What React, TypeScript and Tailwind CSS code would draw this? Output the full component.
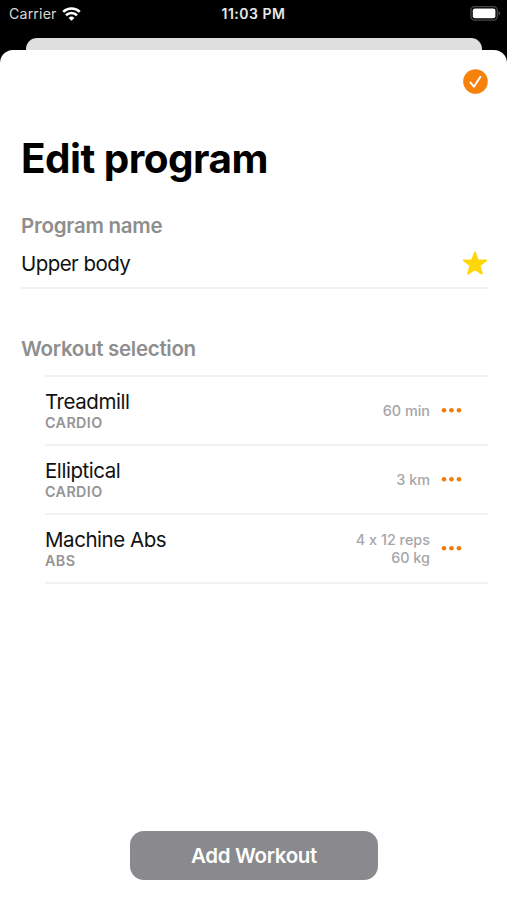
type Workout = {
  name: string;
  category: string;
  details: string[];
};

const WORKOUTS: Workout[] = [
  { name: "Treadmill", category: "CARDIO", details: ["60 min"] },
  { name: "Elliptical", category: "CARDIO", details: ["3 km"] },
  { name: "Machine Abs", category: "ABS", details: ["4 x 12 reps", "60 kg"] },
];

function WifiIcon() {
  return (
    <svg width="19" height="14" viewBox="0 0 19 14" fill="none" stroke="white" strokeWidth="2.6">
      <path d="M1.2 4.9a11.9 11.9 0 0 1 16.6 0" />
      <path d="M4 8.2a7.9 7.9 0 0 1 11 0" />
      <path d="M9.5 13.8 6.6 10.9a4.1 4.1 0 0 1 5.8 0z" fill="white" stroke="none" />
    </svg>
  );
}

function BatteryIcon() {
  return (
    <svg width="31" height="15" viewBox="0 0 31 15" fill="none">
      <rect x="0.9" y="0.7" width="26.4" height="13.4" rx="3.8" stroke="#4a4a4c" strokeWidth="1.3" />
      <rect x="2.8" y="2.6" width="22.6" height="9.6" rx="2" fill="white" />
      <path d="M28.6 5.2c1.1.4 1.6 1.2 1.6 2.2s-.5 1.8-1.6 2.2z" fill="#4a4a4c" />
    </svg>
  );
}

function StatusBar() {
  return (
    <div className="grid h-[38px] grid-cols-3 pt-[3px] text-white">
      <div className="flex h-[21px] items-center gap-[5px] pl-[9px]">
        <span className="text-[14.2px] tracking-[0.15px] text-[#d8d8d8]">Carrier</span>
        <WifiIcon />
      </div>
      <div className="flex h-[21px] items-center justify-center text-[14px] font-semibold tracking-[0.5px] text-[#e8e8e8]">
        11:03 PM
      </div>
      <div className="flex h-[21px] items-center justify-end pr-[6px]">
        <BatteryIcon />
      </div>
    </div>
  );
}

function WorkoutRow({ workout }: { workout: Workout }) {
  return (
    <li className="flex h-[69px] items-center border-b-2 border-[#f1f1f2]">
      <div className="flex-1 pt-0.5">
        <p className="text-[20.5px] leading-[22px] tracking-[-0.45px] text-[#111]">{workout.name}</p>
        <p className="text-[14.3px] font-semibold leading-5 tracking-[0.4px] text-[#949496]">{workout.category}</p>
      </div>
      <div className="text-right text-[14.4px] font-medium leading-[18px] text-[#a6a6a8]">
        {workout.details.map((d) => (
          <p key={d}>{d}</p>
        ))}
      </div>
      <button className="mr-[26px] ml-[11px]" aria-label="More">
        <svg width="21" height="7" viewBox="0 0 21 7" fill="#ee7d0c">
          <circle cx="3" cy="3.2" r="2.3" />
          <circle cx="10.5" cy="3.2" r="2.3" />
          <circle cx="18" cy="3.2" r="2.3" />
        </svg>
      </button>
    </li>
  );
}

export default function App() {
  return (
    <div className="flex h-[900px] w-[507px] flex-col overflow-hidden bg-black font-[Inter,sans-serif] [font-feature-settings:'calt'_0]">
      <StatusBar />
      <div className="mr-[25px] ml-[26px] h-3 rounded-t-[11px] bg-[#dfdfdf]" />
      <main className="flex flex-1 flex-col rounded-t-[13px] bg-white pr-[19px] pl-[21px]">
        <div className="flex justify-end pt-[19px]">
          <button aria-label="Done">
            <svg width="25" height="25" viewBox="0 0 25 25" fill="none">
              <circle cx="12.5" cy="12.5" r="12.3" fill="#f6820c" />
              <path d="m7.3 13.4 3.6 4.3 6.5-9.8" stroke="white" strokeWidth="1.9" strokeLinecap="round" strokeLinejoin="round" />
            </svg>
          </button>
        </div>
        <h1 className="mt-[41px] text-[40.5px] font-bold leading-[48px] tracking-[-0.55px] text-black">Edit program</h1>
        <h2 className="mt-[31px] text-[20.5px] font-semibold leading-6 tracking-[-0.25px] text-[#8e8e90]">Program name</h2>
        <div className="flex h-[51px] items-center justify-between border-b-2 border-[#f1f1f2]">
          <span className="pt-0.5 text-[20.5px] leading-6 tracking-[-0.55px] text-[#111]">Upper body</span>
          <svg className="mt-0.5" width="26" height="25" viewBox="0 0 26 25" fill="#ffd60a">
            <path
              d="M13 1.4 15.8 9.2 24.3 9.4 17.6 14.6 19.9 22.7 13 18 6.1 22.7 8.4 14.6 1.7 9.4 10.2 9.2Z"
              stroke="#ffd60a"
              strokeWidth="1.8"
              strokeLinejoin="round"
            />
          </svg>
        </div>
        <h2 className="mt-12 text-[20.5px] font-semibold leading-6 tracking-[-0.3px] text-[#8e8e90]">Workout selection</h2>
        <ul className="mt-3.5 ml-6 border-t-2 border-[#f1f1f2]">
          {WORKOUTS.map((w) => (
            <WorkoutRow key={w.name} workout={w} />
          ))}
        </ul>
        <button className="mt-auto mb-5 ml-[109px] h-[49px] w-[248px] rounded-[14px] bg-[#8a8a8e] pt-0.5 text-[20.5px] font-semibold tracking-[-0.35px] text-white">
          Add Workout
        </button>
      </main>
    </div>
  );
}
